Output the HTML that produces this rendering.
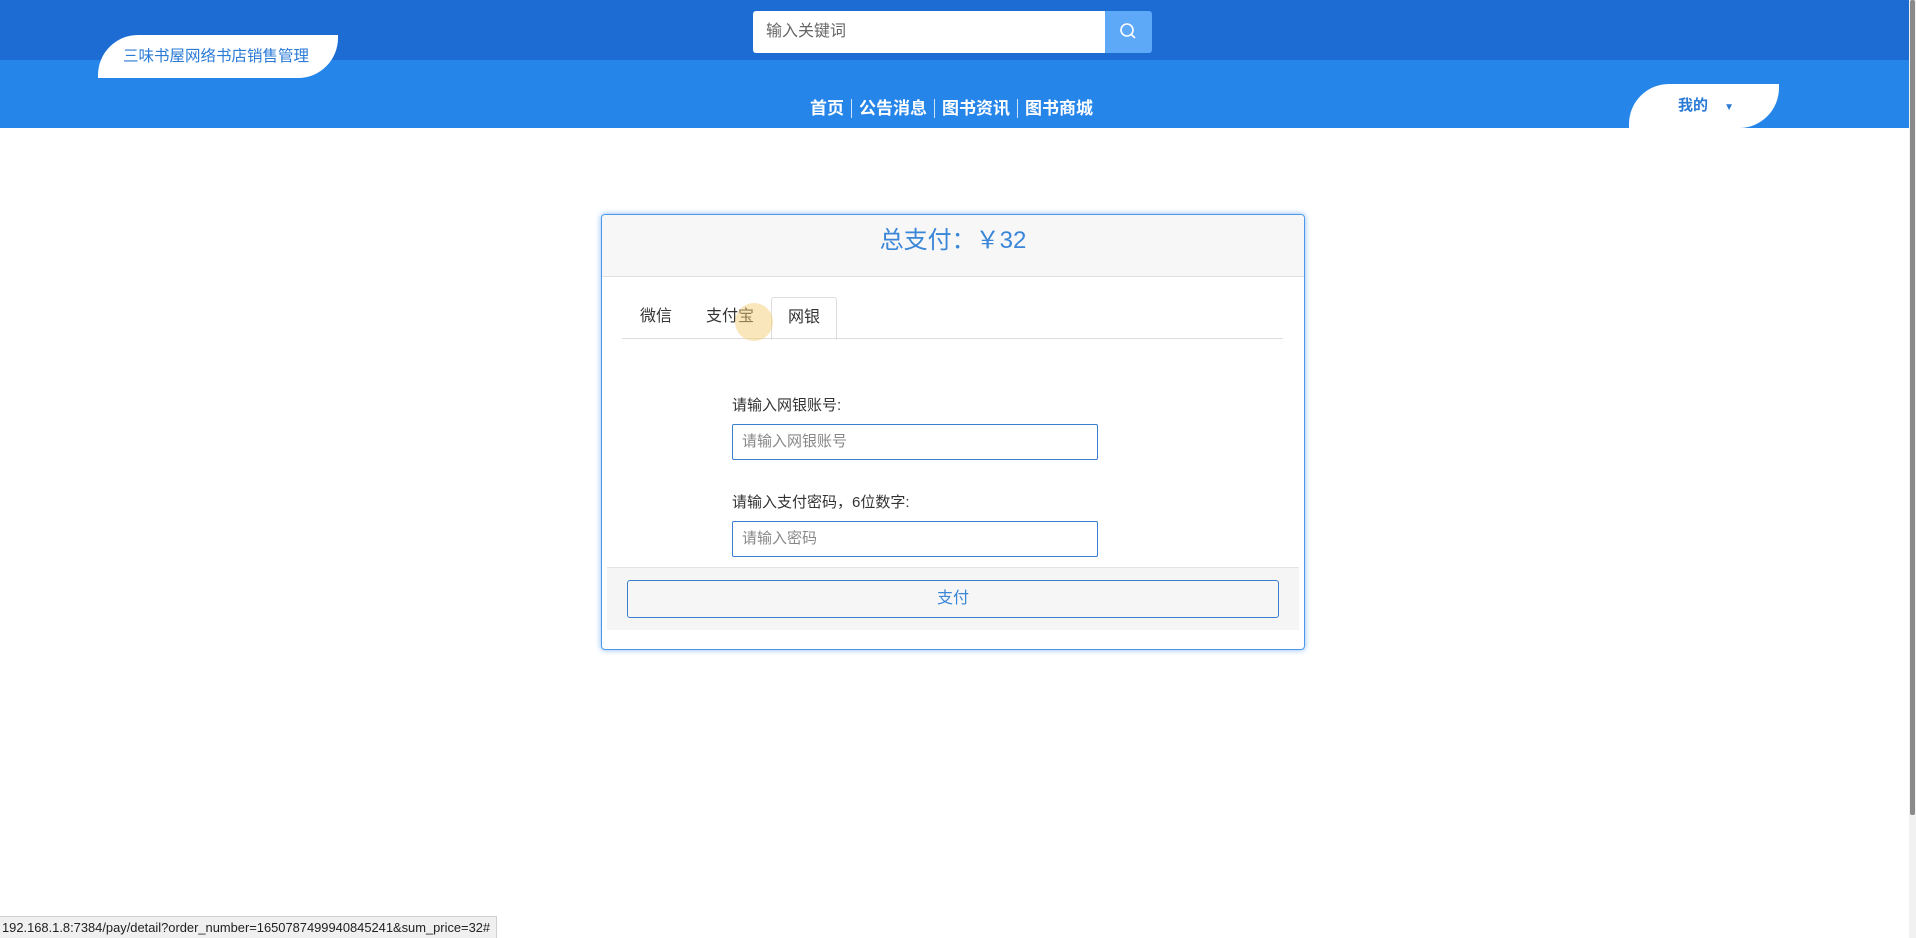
<!DOCTYPE html>
<html><head><meta charset="utf-8"><style>
*{box-sizing:border-box;margin:0;padding:0}
body{width:1916px;height:938px;overflow:hidden;background:#fff;font-family:"Liberation Sans","Noto Sans CJK SC",sans-serif;position:relative}
.top{position:absolute;left:0;top:0;width:1909px;height:60px;background:#1c6cd3}
.bar{position:absolute;left:0;top:60px;width:1909px;height:68px;background:#2585e9}
.scroll{position:absolute;right:0;top:0;width:7px;height:938px;background:#f1f1f1}
.scroll i{position:absolute;left:1px;top:0;width:5px;height:815px;background:#8a8a8a;border-radius:2px}
.search{position:absolute;left:753px;top:11px;width:352px;height:42px;background:#fff;border-radius:3px 0 0 3px;font-size:16px;color:#666;line-height:42px;padding-left:13px}
.sbtn{position:absolute;left:1105px;top:11px;width:47px;height:42px;background:#5ea8f8;border-radius:0 3px 3px 0}
.logo{position:absolute;left:98px;top:35px;width:240px;height:43px;background:#fff;border-radius:40px 0 40px 0;color:#2a7ad6;font-size:15.5px;line-height:43px;text-align:center;padding-right:4px}
.nav{position:absolute;left:810px;top:98px;color:#fff;font-weight:bold;font-size:17px;line-height:22px;white-space:nowrap}
.nav span{padding:0 7px;border-left:1px solid #cfe3fa}
.nav span:first-child{border:none;padding-left:0}
.me{position:absolute;left:1629px;top:84px;width:150px;height:44px;background:#fff;border-radius:40px 0 40px 0;color:#2a7ad6;font-weight:bold;font-size:15px;line-height:44px;padding-left:49px}
.card{position:absolute;left:601px;top:214px;width:704px;height:436px;border:1px solid #4d97ea;border-radius:4px;box-shadow:0 0 6px rgba(50,140,240,.6);background:#fff;overflow:hidden}
.ch{height:62px;background:#f7f7f7;border-bottom:1px solid #e0e0e0;text-align:center;color:#3a86d8;font-size:24px;line-height:52px}
.tabs{position:absolute;left:20px;top:82px;width:661px;height:42px;border-bottom:1px solid #ddd}
.tab{position:absolute;top:0;height:42px;line-height:40px;font-size:16px;color:#333}
.tab.act{left:149px;width:66px;border:1px solid #ddd;border-bottom:1px solid #fff;border-radius:3px 3px 0 0;text-align:center;height:43px}
.lbl{position:absolute;left:130px;font-size:15px;color:#333}
.inp{position:absolute;left:130px;width:366px;height:36px;border:1px solid #3a7fcf;border-radius:2px;font-size:15px;color:#888;line-height:34px;padding-left:9px}
.foot{position:absolute;left:5px;top:352px;width:692px;height:63px;background:#f5f5f5;border-top:1px solid #e3e3e3}
.pbtn{position:absolute;left:20px;top:12px;width:652px;height:38px;border:1px solid #3a7fcf;border-radius:3px;background:#f6f6f6;text-align:center;line-height:36px;color:#3a86d8;font-size:16px}
.status{position:absolute;left:0;top:916px;width:497px;height:22px;background:#f0f0f0;border:1px solid #d0d0d0;border-left:none;border-bottom:none;font-size:12.9px;color:#222;line-height:21px;padding-left:2px;white-space:nowrap}
.cur{position:absolute;left:735px;top:303px;width:38px;height:38px;border-radius:50%;background:rgba(245,205,120,.5)}
</style></head><body>
<div class="top"></div><div class="bar"></div>
<div class="scroll"><i></i></div>
<div class="search">输入关键词</div>
<div class="sbtn"><svg width="47" height="42"><circle cx="22" cy="19" r="6" fill="none" stroke="#fff" stroke-width="1.6"/><line x1="26.5" y1="23.5" x2="30" y2="27" stroke="#fff" stroke-width="1.6"/></svg></div>
<div class="logo">三味书屋网络书店销售管理</div>
<div class="nav"><span>首页</span><span>公告消息</span><span>图书资讯</span><span>图书商城</span></div>
<div class="me">我的 <span style="font-size:10px;margin-left:12px">▼</span></div>
<div class="card">
<div class="ch">总支付：￥32</div>
<div class="tabs">
<div class="tab" style="left:18px">微信</div>
<div class="tab" style="left:84px">支付宝</div>
<div class="tab act">网银</div>
</div>
<div class="lbl" style="top:179px">请输入网银账号:</div>
<div class="inp" style="top:209px">请输入网银账号</div>
<div class="lbl" style="top:276px">请输入支付密码，6位数字:</div>
<div class="inp" style="top:306px">请输入密码</div>
<div class="foot"><div class="pbtn">支付</div></div>
</div>
<div class="cur"></div>
<div class="status">192.168.1.8:7384/pay/detail?order_number=1650787499940845241&amp;sum_price=32#</div>
</body></html>
